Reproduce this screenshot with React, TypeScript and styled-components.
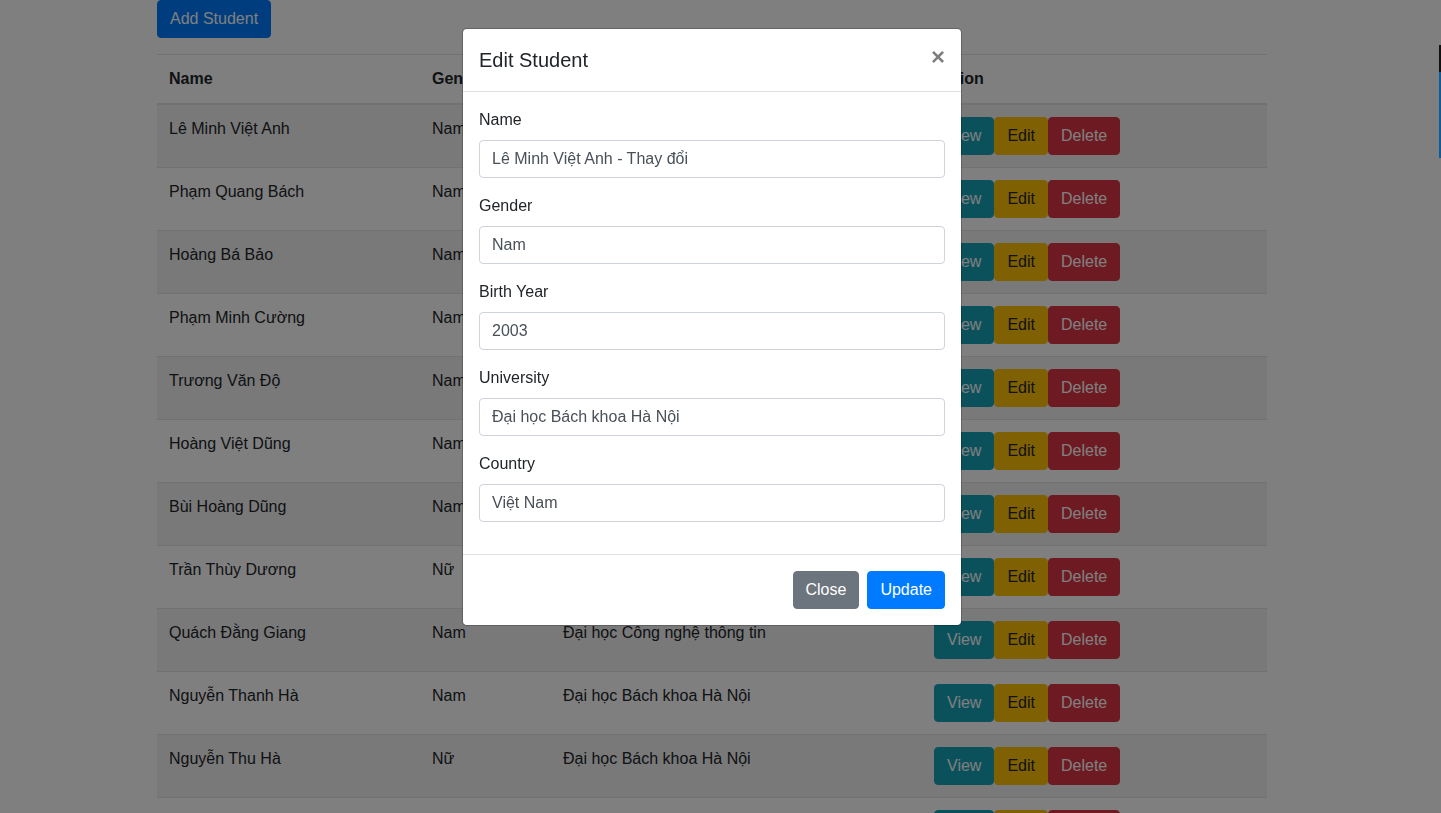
import styled, { createGlobalStyle, css } from 'styled-components';

const GlobalStyle = createGlobalStyle`
  *, *::before, *::after {
    box-sizing: border-box;
  }
  body {
    margin: 0;
    padding-right: 17px;
    font-family: "Liberation Sans", Arial, "Helvetica Neue", sans-serif;
    font-size: 16px;
    line-height: 1.5;
    color: #212529;
    background: #fff;
    overflow: hidden;
  }
`;

type Variant = 'primary' | 'secondary' | 'info' | 'warning' | 'danger';

const variants: Record<Variant, { bg: string; fg: string }> = {
  primary: { bg: '#007bff', fg: '#fff' },
  secondary: { bg: '#6c757d', fg: '#fff' },
  info: { bg: '#17a2b8', fg: '#fff' },
  warning: { bg: '#ffc107', fg: '#212529' },
  danger: { bg: '#dc3545', fg: '#fff' },
};

const students = [
  { name: 'Lê Minh Việt Anh', gender: 'Nam', university: 'Đại học Bách khoa Hà Nội' },
  { name: 'Phạm Quang Bách', gender: 'Nam', university: 'Đại học Quốc gia Hà Nội' },
  { name: 'Hoàng Bá Bảo', gender: 'Nam', university: 'Đại học Bách khoa Hà Nội' },
  { name: 'Phạm Minh Cường', gender: 'Nam', university: 'Đại học Kinh tế Quốc dân' },
  { name: 'Trương Văn Độ', gender: 'Nam', university: 'Đại học Công nghệ thông tin' },
  { name: 'Hoàng Việt Dũng', gender: 'Nam', university: 'Đại học Bách khoa Hà Nội' },
  { name: 'Bùi Hoàng Dũng', gender: 'Nam', university: 'Đại học Quốc gia Hà Nội' },
  { name: 'Trần Thùy Dương', gender: 'Nữ', university: 'Đại học Ngoại thương' },
  { name: 'Quách Đằng Giang', gender: 'Nam', university: 'Đại học Công nghệ thông tin' },
  { name: 'Nguyễn Thanh Hà', gender: 'Nam', university: 'Đại học Bách khoa Hà Nội' },
  { name: 'Nguyễn Thu Hà', gender: 'Nữ', university: 'Đại học Bách khoa Hà Nội' },
  { name: 'Trần Văn Hải', gender: 'Nam', university: 'Đại học Bách khoa Hà Nội' },
];

const fields = [
  { label: 'Name', value: 'Lê Minh Việt Anh - Thay đổi' },
  { label: 'Gender', value: 'Nam' },
  { label: 'Birth Year', value: '2003' },
  { label: 'University', value: 'Đại học Bách khoa Hà Nội' },
  { label: 'Country', value: 'Việt Nam' },
];

export default function App() {
  return (
    <>
      <GlobalStyle />
      <StyledContainer>
        <StyledButton $variant="primary" $gap>
          Add Student
        </StyledButton>
        <StyledTable>
          <colgroup>
            <StyledCol $width={263} />
            <StyledCol $width={131} />
            <StyledCol $width={371} />
            <StyledCol $width={345} />
          </colgroup>
          <thead>
            <tr>
              <StyledTh>Name</StyledTh>
              <StyledTh>Gender</StyledTh>
              <StyledTh>University</StyledTh>
              <StyledTh>Action</StyledTh>
            </tr>
          </thead>
          <tbody>
            {students.map((s) => (
              <StyledRow key={s.name}>
                <StyledTd>{s.name}</StyledTd>
                <StyledTd>{s.gender}</StyledTd>
                <StyledTd>{s.university}</StyledTd>
                <StyledTd>
                  <StyledButton $variant="info">View</StyledButton>
                  <StyledButton $variant="warning">Edit</StyledButton>
                  <StyledButton $variant="danger">Delete</StyledButton>
                </StyledTd>
              </StyledRow>
            ))}
          </tbody>
        </StyledTable>
      </StyledContainer>

      <StyledBackdrop />
      <StyledEdgeMark />
      <StyledModal>
        <StyledDialog>
          <StyledHeader>
            <StyledTitle>Edit Student</StyledTitle>
            <StyledClose aria-label="Close">×</StyledClose>
          </StyledHeader>
          <StyledBody>
            {fields.map((f) => (
              <StyledFormGroup key={f.label}>
                <StyledLabel>{f.label}</StyledLabel>
                <StyledInput defaultValue={f.value} />
              </StyledFormGroup>
            ))}
          </StyledBody>
          <StyledFooter>
            <StyledButton $variant="secondary" $footer>
              Close
            </StyledButton>
            <StyledButton $variant="primary" $footer>
              Update
            </StyledButton>
          </StyledFooter>
        </StyledDialog>
      </StyledModal>
    </>
  );
}

const StyledContainer = styled.div`
  max-width: 1140px;
  margin: 0 auto;
  padding: 0 15px;
`;

const StyledButton = styled.button<{ $variant: Variant; $gap?: boolean; $footer?: boolean }>`
  display: inline-block;
  padding: 6px 12px;
  font-family: inherit;
  font-size: 16px;
  line-height: 1.5;
  font-weight: 400;
  border-radius: 4px;
  cursor: pointer;
  vertical-align: middle;
  background: ${({ $variant }) => variants[$variant].bg};
  color: ${({ $variant }) => variants[$variant].fg};
  border: 1px solid ${({ $variant }) => variants[$variant].bg};
  ${({ $gap }) =>
    $gap &&
    css`
      margin-bottom: 16px;
    `}
  ${({ $footer }) =>
    $footer &&
    css`
      margin: 4px;
    `}
`;

const StyledTable = styled.table`
  width: 100%;
  table-layout: fixed;
  border-collapse: collapse;
  color: #212529;
`;

const StyledCol = styled.col<{ $width: number }>`
  width: ${({ $width }) => $width}px;
`;

const StyledTh = styled.th`
  padding: 12px;
  text-align: left;
  font-weight: 700;
  vertical-align: bottom;
  border-top: 1px solid #dee2e6;
  border-bottom: 2px solid #dee2e6;
`;

const StyledRow = styled.tr`
  &:nth-of-type(odd) {
    background-color: rgba(0, 0, 0, 0.05);
  }
`;

const StyledTd = styled.td`
  padding: 12px;
  vertical-align: top;
  border-top: 1px solid #dee2e6;
  white-space: nowrap;
`;

const StyledBackdrop = styled.div`
  position: fixed;
  inset: 0;
  z-index: 1040;
  background: rgba(0, 0, 0, 0.5);
`;

const StyledEdgeMark = styled.div`
  position: fixed;
  top: 45px;
  right: 0;
  width: 2px;
  height: 113px;
  z-index: 1045;
  background: linear-gradient(to bottom, #111 0, #111 27px, #0a5c9a 27px);
`;

const StyledModal = styled.div`
  position: fixed;
  inset: 0;
  z-index: 1050;
  padding-right: 17px;
  overflow: hidden;
`;

const StyledDialog = styled.div`
  display: flex;
  flex-direction: column;
  max-width: 500px;
  margin: 28px auto;
  background: #fff;
  border: 1px solid rgba(0, 0, 0, 0.2);
  border-radius: 4.8px;
  background-clip: padding-box;
`;

const StyledHeader = styled.div`
  display: flex;
  align-items: flex-start;
  justify-content: space-between;
  padding: 16px;
  border-bottom: 1px solid #dee2e6;
`;

const StyledTitle = styled.h5`
  margin: 0;
  font-size: 20px;
  font-weight: 500;
  line-height: 1.5;
`;

const StyledClose = styled.button`
  padding: 16px;
  margin: -16px -16px -16px auto;
  background: transparent;
  border: 0;
  font-family: inherit;
  font-size: 24px;
  font-weight: 700;
  line-height: 1;
  color: #000;
  text-shadow: 0 1px 0 #fff;
  opacity: 0.5;
  cursor: pointer;
`;

const StyledBody = styled.div`
  padding: 16px;
`;

const StyledFormGroup = styled.div`
  margin-bottom: 16px;
`;

const StyledLabel = styled.label`
  display: inline-block;
  margin-bottom: 8px;
`;

const StyledInput = styled.input`
  display: block;
  width: 100%;
  height: 38px;
  padding: 6px 12px;
  font-family: inherit;
  font-size: 16px;
  line-height: 1.5;
  color: #495057;
  background: #fff;
  border: 1px solid #ced4da;
  border-radius: 4px;
  outline: none;
`;

const StyledFooter = styled.div`
  display: flex;
  justify-content: flex-end;
  align-items: center;
  padding: 12px;
  border-top: 1px solid #dee2e6;
`;
